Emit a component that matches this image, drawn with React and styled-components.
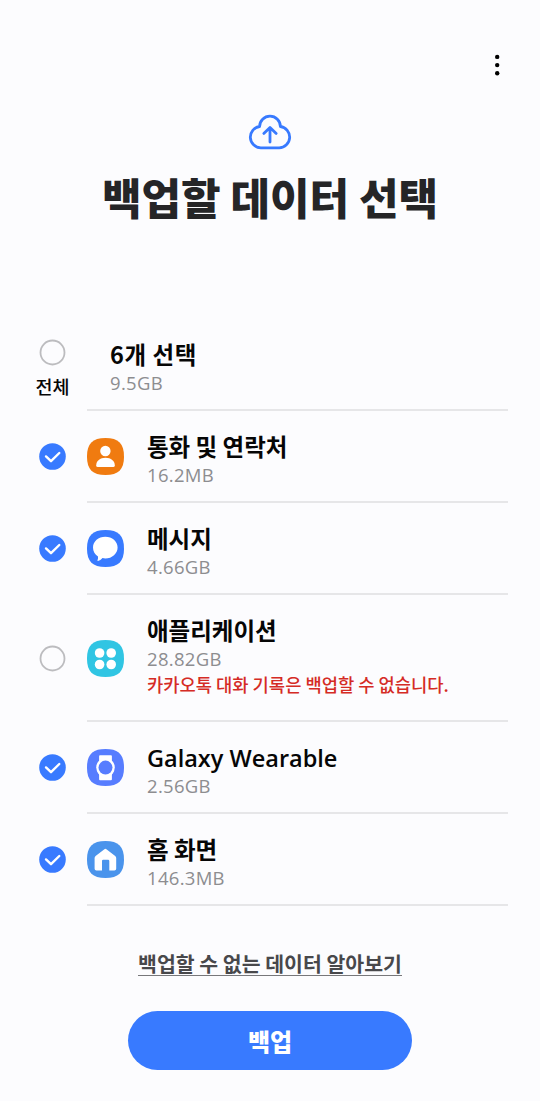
import styled, { createGlobalStyle } from 'styled-components'

const GlobalStyle = createGlobalStyle`
  * {
    box-sizing: border-box;
  }

  body {
    margin: 0;
    background-color: #fcfcfe;
  }
`

const Screen = styled.div`
  display: flex;
  flex-direction: column;
  width: 540px;
  height: 1101px;
  overflow: hidden;
  color: #060606;
  background-color: #fcfcfe;
  font-family: 'Noto Sans CJK KR', sans-serif;
  white-space: nowrap;
`

/////////////
// HEADER //
///////////

const TopBar = styled.div`
  display: flex;
  justify-content: flex-end;
  height: 114px;
  padding: 50px 35px 0 0;
`

const MenuButton = styled.button`
  width: 16px;
  height: 30px;
  padding: 0;
  border: 0;
  background: none;
`

const Header = styled.header`
  display: flex;
  flex-direction: column;
  align-items: center;
  height: 205px;
`

const Title = styled.h1`
  margin: 14px 0 0;
  font-size: 43px;
  font-weight: 900;
  line-height: 64px;
  color: #252527;
`

///////////
// LIST //
/////////

const List = styled.div`
  display: flex;
  flex-direction: column;
`

const Row = styled.div`
  display: grid;
  grid-template-columns: 35px 421px;
  column-gap: 17px;
  height: ${({ $tall }) => ($tall ? '127px' : '92px')};
  padding-left: 35px;
`

const CheckCell = styled.div`
  display: flex;
  flex-direction: column;
  align-items: center;
  justify-content: center;
  padding-bottom: 1px;
`

const AllCell = styled(CheckCell)`
  justify-content: flex-start;
  padding-top: 20px;
`

const AllLabel = styled.div`
  margin-top: 6px;
  font-size: 18.5px;
  font-weight: 500;
  line-height: 28px;
`

const RowBody = styled.div`
  display: flex;
  gap: 23px;
  padding-left: ${({ $indent }) => $indent || '0'};
  border-bottom: 2px solid #e6e6e8;
`

const IconCell = styled.div`
  display: flex;
  align-items: center;
  padding-top: 1px;
`

const Texts = styled.div`
  padding-top: 20px;
`

const Name = styled.div`
  font-family: ${({ $latin }) => ($latin ? "'Open Sans', sans-serif" : 'inherit')};
  font-size: 23.5px;
  font-weight: ${({ $latin }) => ($latin ? 600 : 700)};
  line-height: ${({ $latin }) => ($latin ? '32px' : '30px')};
  margin-bottom: ${({ $latin }) => ($latin ? '-2px' : '0')};
  letter-spacing: ${({ $tracking }) => $tracking || 'normal'};
`

const Size = styled.div`
  font-family: 'Open Sans', sans-serif;
  font-size: 18.5px;
  font-weight: 500;
  line-height: 28px;
  letter-spacing: 0.3px;
  color: #8d8d90;
`

const Warning = styled.div`
  font-size: 17.7px;
  font-weight: 500;
  line-height: 23px;
  color: #d52b25;
`

/////////////
// FOOTER //
///////////

const Footer = styled.footer`
  display: flex;
  flex-direction: column;
  align-items: center;
  padding-top: 42px;
`

const MoreLink = styled.a`
  height: 28px;
  border-bottom: 1px solid #77777a;
  font-size: 20.5px;
  font-weight: 700;
  line-height: 31px;
  color: #48484b;
`

const BackupButton = styled.button`
  width: 284px;
  height: 59px;
  margin-top: 35px;
  padding: 0;
  border: 0;
  border-radius: 30px;
  font-family: inherit;
  font-size: 24px;
  font-weight: 900;
  line-height: 57px;
  color: #fff;
  background-color: #387aff;
`

////////////
// ICONS //
//////////

const Svg = styled.svg`
  display: block;
  flex-shrink: 0;
`

const CloudIcon = () => (
  <Svg width="44" height="36" fill="none" stroke="#387aff" strokeWidth="2.8" strokeLinecap="round" strokeLinejoin="round">
    <path d="M12.8 33.8A10.7 10.7 0 0 1 11.6 12.5A10.4 10.4 0 0 1 32.4 12.5A10.7 10.7 0 0 1 31.2 33.8Z" />
    <path d="M22 28V13.8M15.8 19.4L22 13.4L28.2 19.4" />
  </Svg>
)

const Check = ({ checked }) => (
  <Svg width="27" height="27">
    {checked ? (
      <>
        <circle cx="13.5" cy="13.5" r="13.3" fill="#387aff" />
        <path d="M7 13.4L12 18.2L20.3 10" fill="none" stroke="#fff" strokeWidth="2.4" strokeLinecap="round" strokeLinejoin="round" />
      </>
    ) : (
      <circle cx="13.5" cy="13.5" r="12" fill="none" stroke="#bcbcbf" strokeWidth="1.8" />
    )}
  </Svg>
)

const Tile = ({ color, children }) => (
  <Svg width="37" height="37" fill="#fff">
    <path
      d="M18.5 0C31.5 0 37 5.5 37 18.5S31.5 37 18.5 37S0 31.5 0 18.5S5.5 0 18.5 0Z"
      fill={color}
    />
    {children}
  </Svg>
)

const ContactsIcon = () => (
  <Tile color="#f07b10">
    <circle cx="18.4" cy="13" r="5.2" />
    <path d="M9.2 27.4C9.2 23 13 19.8 18.5 19.8S27.8 23 27.8 27.4Q27.8 29 26.2 29H10.8Q9.2 29 9.2 27.4Z" />
  </Tile>
)

const MessagesIcon = () => (
  <Tile color="#387aff">
    <path d="M18.3 6.7C25.2 6.7 30.6 11.4 30.6 17.4S25.2 28.4 18.3 28.4C17.4 28.4 16.4 28.3 15.5 28.1C14.2 29.6 12.6 30.7 10.9 31Q10.2 31 10.5 30.3C11 29.1 11.2 27.8 11 26.4C7.9 24.4 6 21.1 6 17.4C6 11.4 11.4 6.7 18.3 6.7Z" />
  </Tile>
)

const AppsIcon = () => (
  <Tile color="#30c5e3">
    <circle cx="12.6" cy="13" r="4.8" />
    <circle cx="24.2" cy="13" r="4.8" />
    <circle cx="12.6" cy="24.5" r="4.8" />
    <circle cx="24.2" cy="24.5" r="4.8" />
  </Tile>
)

const WearableIcon = () => (
  <Tile color="#577dff">
    <path d="M13 6.2H24Q24.9 6.2 24.9 7.2V12L26.5 14V23L24.9 25.2V30.2Q24.9 31.2 24 31.2H13Q12.1 31.2 12.1 30.2V25.2L10.5 23V14L12.1 12V7.2Q12.1 6.2 13 6.2Z" />
    <circle cx="18.5" cy="18.6" r="9.3" />
    <circle cx="18.5" cy="18.6" r="7" fill="#577dff" />
  </Tile>
)

const HomeIcon = () => (
  <Tile color="#4a94ec">
    <path d="M17.4 8.2Q18.4 7.4 19.4 8.2L28.2 15.1Q29.2 15.9 29.2 17.1V27.8Q29.2 29.6 27.4 29.6H22.3V20Q22.3 18.8 21.1 18.8H16.2Q15 18.8 15 20V29.6H9.4Q7.6 29.6 7.6 27.8V17.1Q7.6 15.9 8.6 15.1Z" />
  </Tile>
)

const items = [
  { name: '통화 및 연락처', size: '16.2MB', icon: <ContactsIcon />, checked: true },
  { name: '메시지', size: '4.66GB', icon: <MessagesIcon />, checked: true },
  {
    name: '애플리케이션',
    size: '28.82GB',
    icon: <AppsIcon />,
    checked: false,
    warning: '카카오톡 대화 기록은 백업할 수 없습니다.',
  },
  { name: 'Galaxy Wearable', size: '2.56GB', icon: <WearableIcon />, checked: true, latin: true },
  { name: '홈 화면', size: '146.3MB', icon: <HomeIcon />, checked: true },
]

export default function App() {
  return (
    <Screen>
      <GlobalStyle />
      <TopBar>
        <MenuButton aria-label="menu">
          <Svg width="16" height="30">
            <circle cx="8.2" cy="6.9" r="2.2" />
            <circle cx="8.2" cy="15.1" r="2.2" />
            <circle cx="8.2" cy="23.3" r="2.2" />
          </Svg>
        </MenuButton>
      </TopBar>
      <Header>
        <CloudIcon />
        <Title>백업할 데이터 선택</Title>
      </Header>
      <List>
        <Row>
          <AllCell>
            <Check checked={false} />
            <AllLabel>전체</AllLabel>
          </AllCell>
          <RowBody $indent="23px">
            <Texts>
              <Name $tracking="0.6px">6개 선택</Name>
              <Size>9.5GB</Size>
            </Texts>
          </RowBody>
        </Row>
        {items.map((item) => (
          <Row key={item.name} $tall={!!item.warning}>
            <CheckCell>
              <Check checked={item.checked} />
            </CheckCell>
            <RowBody>
              <IconCell>{item.icon}</IconCell>
              <Texts>
                <Name $latin={item.latin}>{item.name}</Name>
                <Size>{item.size}</Size>
                {item.warning && <Warning>{item.warning}</Warning>}
              </Texts>
            </RowBody>
          </Row>
        ))}
      </List>
      <Footer>
        <MoreLink>백업할 수 없는 데이터 알아보기</MoreLink>
        <BackupButton>백업</BackupButton>
      </Footer>
    </Screen>
  )
}
